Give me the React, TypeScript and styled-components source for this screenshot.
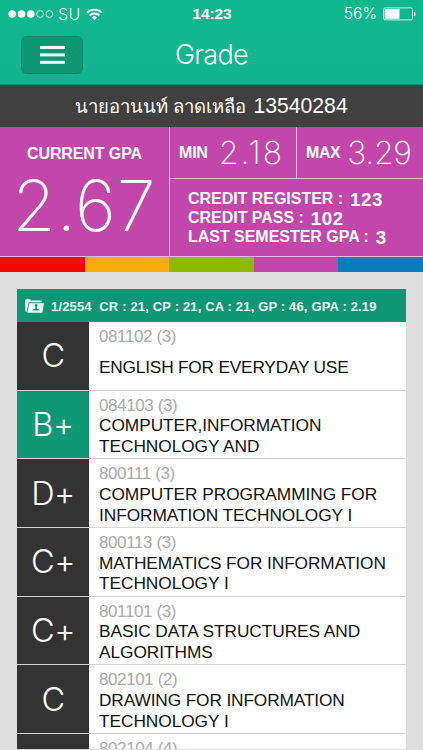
import React from 'react';
import styled, { createGlobalStyle } from 'styled-components';

const sans = '"Liberation Sans", Arial, sans-serif';
const light = 'Inter, "Liberation Sans", sans-serif';

const GlobalStyle = createGlobalStyle`
  * { box-sizing: border-box; }
  html, body { margin: 0; padding: 0; }
  body { background: #dedede; font-family: ${sans}; overflow: hidden; }
`;

const Screen = styled.main`
  width: 423px;
  height: 750px;
  overflow: hidden;
  display: flex;
  flex-direction: column;
  background: #dedede;
`;

const Header = styled.header`
  flex: none;
  height: 85px;
  background: linear-gradient(#10b78e, #12b48f);
  border-bottom: 1px solid #168c70;
  color: #fff;
`;

const StatusBar = styled.div`
  display: grid;
  grid-template-columns: 1fr auto 1fr;
  align-items: center;
  height: 28px;
  padding: 0 7px 0 8px;
  font-size: 16px;
  line-height: 28px;
`;

const StatusGroup = styled.div<{ $end?: boolean }>`
  display: flex;
  align-items: center;
  justify-content: ${(p) => (p.$end ? 'flex-end' : 'flex-start')};
  gap: 6px;
`;

const Carrier = styled.span`
  margin-left: -2px;
  font-family: ${light};
  font-weight: 300;
  font-size: 16px;
  letter-spacing: 0.3px;
`;

const Clock = styled.span`
  font-weight: 700;
  font-size: 15.5px;
  letter-spacing: -0.15px;
`;

const Percent = styled.span`
  font-family: ${light};
  font-weight: 300;
  font-size: 15.5px;
  letter-spacing: 0.1px;
`;

const TitleBar = styled.div`
  display: grid;
  grid-template-columns: 62px 1fr 62px;
  height: 54px;
  padding: 8px 21px;
`;

const MenuButton = styled.button`
  display: flex;
  align-items: center;
  justify-content: center;
  width: 62px;
  height: 38px;
  padding: 0;
  border: 1px solid #0c8365;
  border-radius: 6px;
  background: #0e9675;
`;

const Title = styled.h1`
  margin: 0;
  text-align: center;
  font-family: ${light};
  font-weight: 300;
  font-size: 27px;
  line-height: 37px;
  letter-spacing: -0.7px;
`;

const Student = styled.div`
  flex: none;
  display: flex;
  align-items: baseline;
  justify-content: center;
  gap: 7px;
  height: 42px;
  background: #414041;
  color: #fff;
  font-size: 18.5px;
  line-height: 42px;
  white-space: nowrap;
`;

const StudentId = styled.span`
  font-size: 21.2px;
`;

const Summary = styled.section`
  flex: none;
  display: grid;
  grid-template-columns: 169px 1fr;
  height: 130px;
  background: #c346aa;
  color: #fff;
  border-bottom: 1px solid #eab9df;
`;

const Current = styled.div`
  padding-top: 17px;
  text-align: center;
`;

const Label = styled.div<{ $spacing?: number }>`
  font-weight: 700;
  font-size: 16px;
  line-height: 20px;
  letter-spacing: ${(p) => p.$spacing ?? 0}px;
`;

const BigNumber = styled.div`
  font-family: ${light};
  font-weight: 250;
  font-size: 70px;
  line-height: 84px;
  letter-spacing: 0.9px;
  white-space: nowrap;
`;

const Details = styled.div`
  display: grid;
  grid-template-rows: 52px 1fr;
  border-left: 1px solid #eab9df;
`;

const Range = styled.div`
  display: grid;
  grid-template-columns: 126px 1fr;
  border-bottom: 1px solid #eab9df;
`;

const Extreme = styled.div<{ $divided?: boolean }>`
  display: flex;
  align-items: center;
  gap: ${(p) => (p.$divided ? 7 : 11)}px;
  padding: 1px 0 0 9px;
  border-left: ${(p) => (p.$divided ? '1px solid #eab9df' : '0')};
`;

const MidNumber = styled.span<{ $spacing: number }>`
  font-family: ${light};
  font-weight: 250;
  font-size: 32px;
  line-height: 48px;
  margin-top: -1px;
  letter-spacing: ${(p) => p.$spacing}px;
`;

const Credits = styled.div`
  padding: 10px 0 0 18px;
`;

const CreditLine = styled.div`
  display: flex;
  height: 19.2px;
  font-weight: 700;
  font-size: 16px;
  line-height: 19px;
  letter-spacing: -0.03px;
  white-space: pre;
`;

const CreditValue = styled.span`
  margin-left: 7px;
  font-size: 18.8px;
  line-height: 22px;
  letter-spacing: 0.5px;
`;

const Stripes = styled.div`
  flex: none;
  display: grid;
  grid-template-columns: repeat(5, 1fr);
  height: 15px;
`;

const Stripe = styled.div<{ $color: string }>`
  background: ${(p) => p.$color};
`;

const Semester = styled.section`
  flex: none;
  margin: 17px 17px 0;
  height: 459.5px;
  overflow: hidden;
  background: #fff;
`;

const SemesterHeader = styled.div`
  display: flex;
  align-items: center;
  height: 33px;
  padding: 1px 0 0 8px;
  background: #0e9675;
  color: #e9fff8;
  font-weight: 700;
  font-size: 13px;
  white-space: pre;
`;

const SemesterText = styled.span`
  margin-left: 7px;
  letter-spacing: 0.16px;
`;

const Row = styled.article`
  display: grid;
  grid-template-columns: 72px 1fr;
  height: 68.65px;
  border-bottom: 1px solid #d5d5d5;
`;

const Grade = styled.div<{ $highlight?: boolean }>`
  display: flex;
  align-items: center;
  justify-content: center;
  background: ${(p) => (p.$highlight ? '#0e9675' : '#333')};
  color: #fff;
  font-family: ${light};
  font-weight: 300;
  font-size: 32.5px;
  letter-spacing: -0.5px;
  font-feature-settings: 'calt' 0;
`;

const Course = styled.div`
  display: flex;
  flex-direction: column;
  padding: 4px 0 1px 10px;
`;

const Code = styled.div`
  color: #aaa;
  font-size: 17px;
  line-height: 21px;
  letter-spacing: -0.4px;
`;

const Names = styled.div`
  flex: 1;
  display: flex;
  flex-direction: column;
  justify-content: center;
  margin-top: -1px;
  font-size: 17.3px;
  line-height: 20.6px;
  color: #111;
  white-space: nowrap;
`;

const NameLine = styled.span<{ $spacing?: number }>`
  letter-spacing: ${(p) => p.$spacing ?? -0.05}px;
`;

const SignalDots = () => (
  <svg width="46" height="10" viewBox="0 0 46 10">
    {[0, 1, 2, 3, 4].map((i) => (
      <circle key={i} cx={4.2 + i * 9.3} cy="5" r={i < 3 ? 3.8 : 3.4} fill={i < 3 ? '#fff' : 'none'} stroke="#fff" strokeWidth={i < 3 ? 0 : 0.7} />
    ))}
  </svg>
);

const Wifi = () => (
  <svg width="17" height="13" viewBox="0 0 17 13" fill="none" stroke="#fff" strokeWidth="1.9">
    <path d="M1 4.7a10.6 10.6 0 0 1 15 0" />
    <path d="M3.7 7.5a6.8 6.8 0 0 1 9.6 0" />
    <path d="M8.5 12.2 5.8 9.4a3.8 3.8 0 0 1 5.4 0Z" fill="#fff" stroke="none" />
  </svg>
);

const Battery = () => (
  <svg width="33" height="14" viewBox="0 0 33 14">
    <rect x="0.5" y="0.9" width="29" height="12" rx="1.5" fill="none" stroke="#fff" strokeWidth="0.8" />
    <rect x="1.7" y="2" width="14.8" height="9.8" fill="#fff" />
    <path d="M31 4.8c2.2.7 2.2 3.7 0 4.4Z" fill="#fff" />
  </svg>
);

const MenuIcon = () => (
  <svg width="25" height="18" viewBox="0 0 25 18" fill="#e8fff8">
    <rect y="0" width="25" height="3" />
    <rect y="7.4" width="25" height="3" />
    <rect y="14.8" width="25" height="3" />
  </svg>
);

const FolderIcon = () => (
  <svg width="19" height="14" viewBox="0 0 18 13">
    <path d="M0 1.2Q0 0 1 0h3.7l1.1 1.3h10V3H3.5L1.9 10.5 1.3 12.5Q.5 12.3.4 11Z" fill="#e9fff8" />
    <path d="M4 3.8h14l-1.4 8.1q-.2 1-1.2 1H2.3Z" fill="#e9fff8" />
    <circle cx="10.5" cy="6" r="1.3" fill="#0e9675" />
    <path d="M9.8 7h1.4v2l1.8.5v1.2H7.8V9.5L9.8 9Z" fill="#0e9675" />
  </svg>
);

type Line = { text: string; spacing?: number };
type CourseEntry = { grade: string; code: string; lines: Line[]; highlight?: boolean };

const courses: CourseEntry[] = [
  { grade: 'C', code: '081102 (3)', lines: [{ text: 'ENGLISH FOR EVERYDAY USE', spacing: -0.21 }] },
  { grade: 'B+', code: '084103 (3)', lines: [{ text: 'COMPUTER,INFORMATION' }, { text: 'TECHNOLOGY AND' }], highlight: true },
  { grade: 'D+', code: '800111 (3)', lines: [{ text: 'COMPUTER PROGRAMMING FOR' }, { text: 'INFORMATION TECHNOLOGY I' }] },
  { grade: 'C+', code: '800113 (3)', lines: [{ text: 'MATHEMATICS FOR INFORMATION', spacing: -0.08 }, { text: 'TECHNOLOGY I' }] },
  { grade: 'C+', code: '801101 (3)', lines: [{ text: 'BASIC DATA STRUCTURES AND' }, { text: 'ALGORITHMS' }] },
  { grade: 'C', code: '802101 (2)', lines: [{ text: 'DRAWING FOR INFORMATION', spacing: -0.13 }, { text: 'TECHNOLOGY I' }] },
  { grade: '', code: '802104 (4)', lines: [] },
];

export default function App() {
  return (
    <Screen>
      <GlobalStyle />
      <Header>
        <StatusBar>
          <StatusGroup>
            <SignalDots />
            <Carrier>SU</Carrier>
            <Wifi />
          </StatusGroup>
          <Clock>14:23</Clock>
          <StatusGroup $end>
            <Percent>56%</Percent>
            <Battery />
          </StatusGroup>
        </StatusBar>
        <TitleBar>
          <MenuButton aria-label="Menu">
            <MenuIcon />
          </MenuButton>
          <Title>Grade</Title>
        </TitleBar>
      </Header>
      <Student>
        <span>นายอานนท์ ลาดเหลือ</span>
        <StudentId>13540284</StudentId>
      </Student>
      <Summary>
        <Current>
          <Label $spacing={-0.1}>CURRENT GPA</Label>
          <BigNumber>2.67</BigNumber>
        </Current>
        <Details>
          <Range>
            <Extreme>
              <Label $spacing={-0.2}>MIN</Label>
              <MidNumber $spacing={2}>2.18</MidNumber>
            </Extreme>
            <Extreme $divided>
              <Label $spacing={-0.4}>MAX</Label>
              <MidNumber $spacing={-0.3}>3.29</MidNumber>
            </Extreme>
          </Range>
          <Credits>
            <CreditLine>CREDIT REGISTER :<CreditValue>123</CreditValue></CreditLine>
            <CreditLine>CREDIT PASS :<CreditValue>102</CreditValue></CreditLine>
            <CreditLine>LAST SEMESTER GPA :<CreditValue>3</CreditValue></CreditLine>
          </Credits>
        </Details>
      </Summary>
      <Stripes>
        {['#f20a00', '#f7ab0c', '#8cba00', '#c346aa', '#0b7cba'].map((c) => (
          <Stripe key={c} $color={c} />
        ))}
      </Stripes>
      <Semester>
        <SemesterHeader>
          <FolderIcon />
          <SemesterText>{'1/2554  CR : 21, CP : 21, CA : 21, GP : 46, GPA : 2.19'}</SemesterText>
        </SemesterHeader>
        {courses.map((c) => (
          <Row key={c.code}>
            <Grade $highlight={c.highlight}>{c.grade}</Grade>
            <Course>
              <Code>{c.code}</Code>
              <Names>
                {c.lines.map((l) => (
                  <NameLine key={l.text} $spacing={l.spacing}>{l.text}</NameLine>
                ))}
              </Names>
            </Course>
          </Row>
        ))}
      </Semester>
    </Screen>
  );
}
